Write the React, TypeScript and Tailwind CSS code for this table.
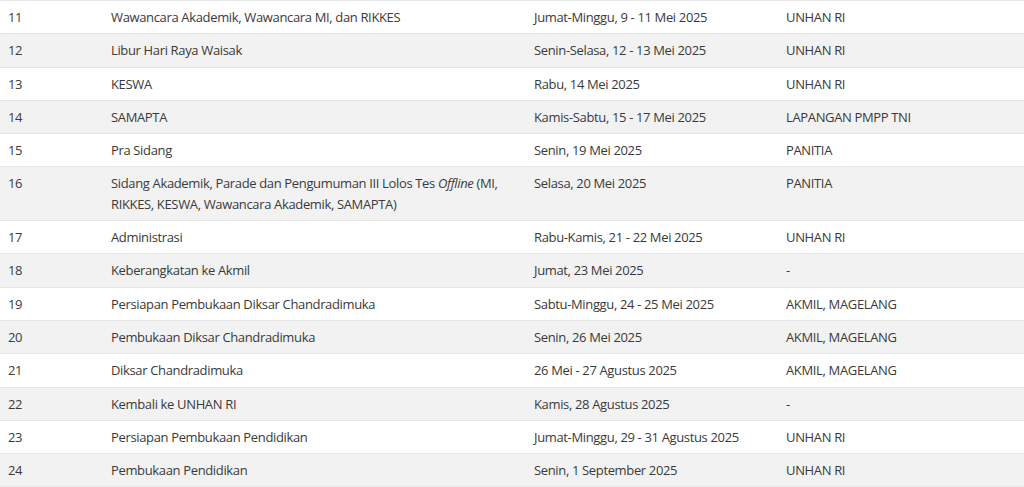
const rows: [string, React.ReactNode, string, string][] = [
  ["11", "Wawancara Akademik, Wawancara MI, dan RIKKES", "Jumat-Minggu, 9 - 11 Mei 2025", "UNHAN RI"],
  ["12", "Libur Hari Raya Waisak", "Senin-Selasa, 12 - 13 Mei 2025", "UNHAN RI"],
  ["13", "KESWA", "Rabu, 14 Mei 2025", "UNHAN RI"],
  ["14", "SAMAPTA", "Kamis-Sabtu, 15 - 17 Mei 2025", "LAPANGAN PMPP TNI"],
  ["15", "Pra Sidang", "Senin, 19 Mei 2025", "PANITIA"],
  [
    "16",
    <>
      Sidang Akademik, Parade dan Pengumuman III Lolos Tes <em>Offline</em> (MI, RIKKES, KESWA, Wawancara Akademik, SAMAPTA)
    </>,
    "Selasa, 20 Mei 2025",
    "PANITIA",
  ],
  ["17", "Administrasi", "Rabu-Kamis, 21 - 22 Mei 2025", "UNHAN RI"],
  ["18", "Keberangkatan ke Akmil", "Jumat, 23 Mei 2025", "-"],
  ["19", "Persiapan Pembukaan Diksar Chandradimuka", "Sabtu-Minggu, 24 - 25 Mei 2025", "AKMIL, MAGELANG"],
  ["20", "Pembukaan Diksar Chandradimuka", "Senin, 26 Mei 2025", "AKMIL, MAGELANG"],
  ["21", "Diksar Chandradimuka", "26 Mei - 27 Agustus 2025", "AKMIL, MAGELANG"],
  ["22", "Kembali ke UNHAN RI", "Kamis, 28 Agustus 2025", "-"],
  ["23", "Persiapan Pembukaan Pendidikan", "Jumat-Minggu, 29 - 31 Agustus 2025", "UNHAN RI"],
  ["24", "Pembukaan Pendidikan", "Senin, 1 September 2025", "UNHAN RI"],
]

export default function App() {
  return (
    <div className="w-full bg-white" style={{ fontFamily: '"Open Sans", "Noto Sans", sans-serif' }}>
      <table className="w-full table-fixed border-collapse text-[13px] leading-[20.3px] tracking-[-0.35px] text-[#3a3a3a]">
        <colgroup>
          <col className="w-[103px]" />
          <col className="w-[423px]" />
          <col className="w-[252px]" />
          <col />
        </colgroup>
        <tbody>
          {rows.map(([no, kegiatan, waktu, tempat], i) => (
            <tr key={no} className={`border-y border-[#e6e6e6] ${i % 2 === 1 ? "bg-[#f2f2f2]" : "bg-white"}`}>
              <td className="px-2 py-[6px] align-top">{no}</td>
              <td className="px-2 py-[6px] align-top">{kegiatan}</td>
              <td className="px-2 py-[6px] align-top">{waktu}</td>
              <td className="px-2 py-[6px] align-top">{tempat}</td>
            </tr>
          ))}
        </tbody>
      </table>
    </div>
  )
}
